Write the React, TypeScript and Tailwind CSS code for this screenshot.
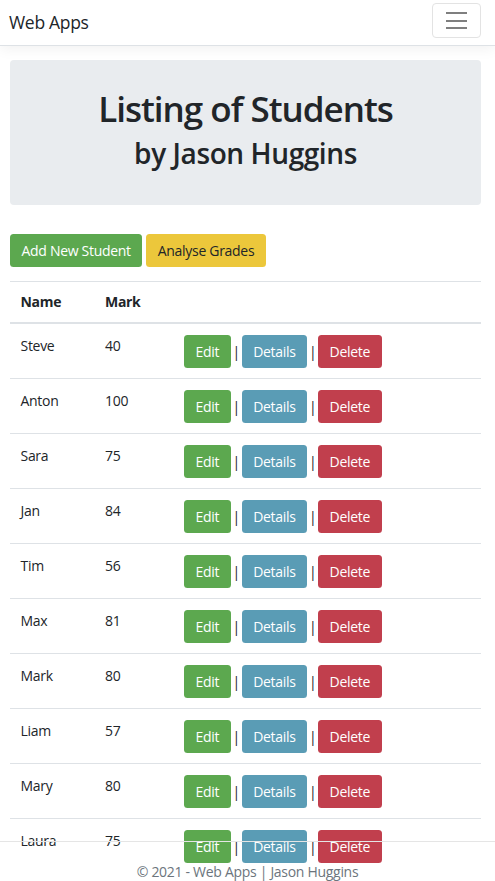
const students = [
  { name: 'Steve', mark: 40 },
  { name: 'Anton', mark: 100 },
  { name: 'Sara', mark: 75 },
  { name: 'Jan', mark: 84 },
  { name: 'Tim', mark: 56 },
  { name: 'Max', mark: 81 },
  { name: 'Mark', mark: 80 },
  { name: 'Liam', mark: 57 },
  { name: 'Mary', mark: 80 },
  { name: 'Laura', mark: 75 },
];

const btn =
  'inline-block rounded-[3.5px] border border-transparent px-[10.5px] py-[5px] leading-[21px]';

function Pipe() {
  return <span className="flex w-[5px] justify-center">|</span>;
}

export default function App() {
  return (
    <div className="relative h-[881px] overflow-hidden bg-white font-['Segoe_UI','Open_Sans',sans-serif] text-[14px] leading-[21px] tracking-[-0.3px] text-[#212529]">
      {/* Navbar */}
      <nav className="flex h-[46px] items-start justify-between border-b border-[#dee2e6] bg-white pl-[9px] pr-[14px] shadow-[0_4px_12px_rgba(0,0,0,0.05)]">
        <a className="mt-[9px] text-[17.5px] leading-[26px] text-[#212529]">Web Apps</a>
        <button className="mt-[3px] flex h-[35px] w-[49px] flex-col items-center justify-center gap-[5.5px] rounded-[4px] border border-[#e3e3e3]">
          <span className="block h-[2px] w-[21px] bg-[#7f7f7f]" />
          <span className="block h-[2px] w-[21px] bg-[#7f7f7f]" />
          <span className="block h-[2px] w-[21px] bg-[#7f7f7f]" />
        </button>
      </nav>

      <main className="pl-[10px] pr-[14px] pt-[14px]">
        {/* Jumbotron */}
        <div className="mb-[29px] rounded-[4px] bg-[#e9ecef] px-[14px] py-[28px] text-center">
          <h1 className="mb-[7px] text-[35px] font-semibold leading-[42px] tracking-[-1px]">
            Listing of Students
          </h1>
          <h2 className="mb-[6px] text-[28px] font-semibold leading-[33.6px] tracking-[-0.4px]">
            by Jason Huggins
          </h2>
        </div>

        {/* Actions */}
        <p className="mb-[14px] flex gap-[4px]">
          <a className={`${btn} bg-[#5ca84f] py-[5.5px] text-white`}>Add New Student</a>
          <a className={`${btn} bg-[#ecc73b] py-[5.5px] text-[#212529]`}>Analyse Grades</a>
        </p>

        {/* Table */}
        <table className="w-full table-fixed border-collapse">
          <thead>
            <tr>
              <th className="w-[84.5px] border-t border-b-2 border-[#dee2e6] px-[10.5px] py-[9.75px] text-left align-bottom font-bold">
                Name
              </th>
              <th className="w-[79px] border-t border-b-2 border-[#dee2e6] px-[10.5px] py-[9.75px] text-left align-bottom font-bold">
                Mark
              </th>
              <th className="border-t border-b-2 border-[#dee2e6] px-[10.5px] py-[9.75px]" />
            </tr>
          </thead>
          <tbody>
            {students.map((s) => (
              <tr key={s.name}>
                <td className="border-t border-[#dee2e6] p-[10.5px] align-top">{s.name}</td>
                <td className="border-t border-[#dee2e6] p-[10.5px] align-top">{s.mark}</td>
                <td className="border-t border-[#dee2e6] p-[10.5px] align-top">
                  <div className="flex items-center gap-[3px] whitespace-nowrap">
                    <a className={`${btn} bg-[#5ca84f] text-white`}>Edit</a>
                    <Pipe />
                    <a className={`${btn} bg-[#5a9cb5] text-white`}>Details</a>
                    <Pipe />
                    <a className={`${btn} bg-[#c13f4d] text-white`}>Delete</a>
                  </div>
                </td>
              </tr>
            ))}
          </tbody>
        </table>
      </main>

      {/* Footer */}
      <footer className="absolute inset-x-0 top-[841px] h-[60px] whitespace-nowrap border-t border-[#e5e5e5] text-center leading-[60px] text-[#6c757d]">
        © 2021 - Web Apps | Jason Huggins
      </footer>
    </div>
  );
}
